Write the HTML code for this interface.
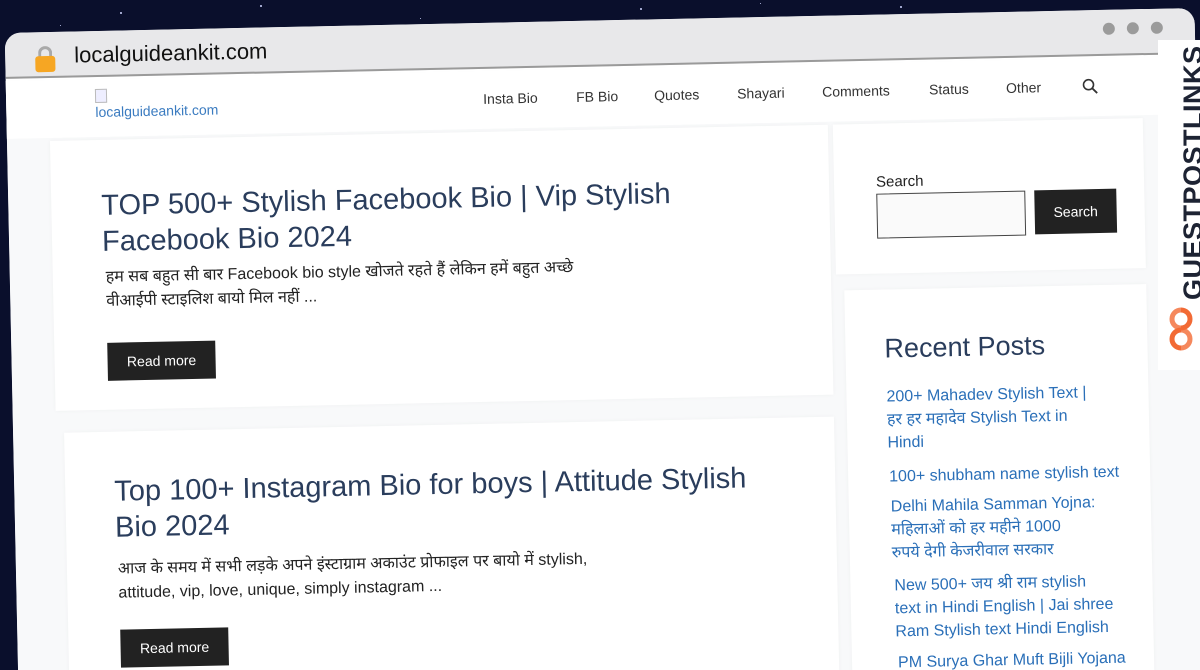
<!DOCTYPE html>
<html style="width:1200px;height:670px;overflow:hidden"><head><meta charset="utf-8"><style>
*{margin:0;padding:0;box-sizing:border-box}
body{width:1200px;height:670px;overflow:hidden;background:#0a0f2c;font-family:"Liberation Sans","DejaVu Sans",sans-serif;position:relative}
.star{position:absolute;background:#cfd6ff;border-radius:50%}
#w{position:absolute;left:0;top:0;width:1200px;height:670px;transform-origin:0 0;transform:rotate(-1.2deg)}
.win{position:absolute;left:4px;top:33px;width:1190px;height:700px;background:#fff;border-radius:16px;overflow:hidden}
.bar{position:absolute;left:0;top:0;width:100%;height:46px;background:#e8e8ea;border-bottom:2px solid #9a9a9a}
.a{position:absolute;white-space:nowrap}
.nav{font-size:14px;color:#333;top:101px}
.card{position:absolute;background:#fff;box-shadow:0 0 5px rgba(0,0,0,.04)}
h2{font-weight:normal;color:#2a3d5c;font-size:29px;line-height:36px}
.p{font-size:16px;color:#222;line-height:24px}
.btn{position:absolute;background:#222;color:#fff;font-size:14px;text-align:center}
.rl{font-size:16px;color:#2a6fb8;line-height:23px}
</style></head><body>
<div class="star" style="left:120px;top:12px;width:2px;height:2px"></div>
<div class="star" style="left:260px;top:5px;width:2px;height:2px"></div>
<div class="star" style="left:420px;top:18px;width:1px;height:1px"></div>
<div class="star" style="left:640px;top:8px;width:2px;height:2px"></div>
<div class="star" style="left:760px;top:3px;width:1px;height:1px"></div>
<div class="star" style="left:60px;top:25px;width:1px;height:1px"></div>
<div class="star" style="left:900px;top:6px;width:2px;height:2px"></div>
<div id="w">
 <div class="win">
  <div class="bar"></div>
  <div style="position:absolute;left:0;top:48px;width:100%;height:700px;background:#f8f9fa"></div>
 </div>
 <div style="position:absolute;left:37px;top:47px;width:14px;height:14px;border:3px solid #a9a9a9;border-bottom:none;border-radius:8px 8px 0 0"></div>
 <div style="position:absolute;left:34px;top:57px;width:20px;height:16px;background:#f6a623;border-radius:3px"></div>
 <div class="a" style="left:73px;top:44px;font-size:22px;color:#111">localguideankit.com</div>
 <div style="position:absolute;left:1102px;top:46px;width:12px;height:12px;border-radius:50%;background:#9b9b9b"></div>
 <div style="position:absolute;left:1126px;top:46px;width:12px;height:12px;border-radius:50%;background:#9b9b9b"></div>
 <div style="position:absolute;left:1150px;top:46px;width:12px;height:12px;border-radius:50%;background:#9b9b9b"></div>
 <div style="position:absolute;left:4px;top:81px;width:1190px;height:58px;background:#fff"></div>
 <div style="position:absolute;left:93px;top:91px;width:12px;height:14px;border:1px solid #bbb;background:#eef"></div>
 <div class="a" style="left:93px;top:106px;font-size:14px;color:#3a7bc0">localguideankit.com</div>
 <div class="a nav" style="left:481px">Insta Bio</div>
 <div class="a nav" style="left:574px">FB Bio</div>
 <div class="a nav" style="left:652px">Quotes</div>
 <div class="a nav" style="left:735px">Shayari</div>
 <div class="a nav" style="left:820px">Comments</div>
 <div class="a nav" style="left:927px">Status</div>
 <div class="a nav" style="left:1004px">Other</div>
 <svg class="a" style="left:1080px;top:101px" width="16" height="16" viewBox="0 0 16 16"><circle cx="6.5" cy="6.5" r="5" fill="none" stroke="#333" stroke-width="1.6"/><path d="M10.3 10.3L15 15" stroke="#333" stroke-width="1.8"/></svg>
 <div class="card" style="left:47px;top:142px;width:778px;height:270px"></div>
 <h2 class="a" style="left:97px;top:190px">TOP 500+ Stylish Facebook Bio | Vip Stylish<br>Facebook Bio 2024</h2>
 <div class="a p" style="left:100px;top:268px">हम सब बहुत सी बार Facebook bio style खोजते रहते हैं लेकिन हमें बहुत अच्छे<br>वीआईपी स्टाइलिश बायो मिल नहीं ...</div>
 <div class="btn" style="left:100px;top:345px;width:108px;height:38px;line-height:38px">Read more</div>
 <div class="card" style="left:55px;top:434px;width:770px;height:300px"></div>
 <h2 class="a" style="left:104px;top:476px">Top 100+ Instagram Bio for boys | Attitude Stylish<br>Bio 2024</h2>
 <div class="a p" style="left:106px;top:560px">आज के समय में सभी लड़के अपने इंस्टाग्राम अकाउंट प्रोफाइल पर बायो में stylish,<br>attitude, vip, love, unique, simply instagram ...</div>
 <div class="btn" style="left:107px;top:632px;width:108px;height:38px;line-height:38px">Read more</div>
 <div class="card" style="left:830px;top:142px;width:310px;height:150px"></div>
 <div class="a" style="left:872px;top:192px;font-size:15px;color:#222">Search</div>
 <div style="position:absolute;left:872px;top:212px;width:149px;height:45px;border:1px solid #444;background:#fafafa"></div>
 <div class="btn" style="left:1030px;top:212px;width:82px;height:44px;line-height:44px">Search</div>
 <div class="card" style="left:838px;top:308px;width:302px;height:420px"></div>
 <div class="a" style="left:877px;top:352px;font-size:27px;color:#2a3d5c">Recent Posts</div>
 <div class="a rl" style="left:878px;top:404px">200+ Mahadev Stylish Text |<br>हर हर महादेव Stylish Text in<br>Hindi</div>
 <div class="a rl" style="left:879px;top:484px">100+ shubham name stylish text</div>
 <div class="a rl" style="left:880px;top:514px">Delhi Mahila Samman Yojna:<br>महिलाओं को हर महीने 1000<br>रुपये देगी केजरीवाल सरकार</div>
 <div class="a rl" style="left:882px;top:593px">New 500+ जय श्री राम stylish<br>text in Hindi English | Jai shree<br>Ram Stylish text Hindi English</div>
 <div class="a rl" style="left:884px;top:670px">PM Surya Ghar Muft Bijli Yojana</div>
</div>
<div style="position:absolute;left:1158px;top:40px;width:42px;height:330px;background:#fff"></div>
<div class="a" style="left:1178px;top:300px;transform-origin:0 0;transform:rotate(-90deg);font-size:27px;font-weight:bold;color:#1d2333;letter-spacing:0.5px">GUESTPOSTLINKS</div>
<svg class="a" style="left:1168px;top:306px" width="26" height="46" viewBox="0 0 26 46"><path d="M13 4a9 9 0 0 1 0 18M13 24a9 9 0 0 0 0 18" fill="none" stroke="#f26a35" stroke-width="5"/><path d="M13 4a9 9 0 0 0 0 18M13 24a9 9 0 0 1 0 18" fill="none" stroke="#f26a35" stroke-width="5" opacity=".8"/></svg>
</body></html>
